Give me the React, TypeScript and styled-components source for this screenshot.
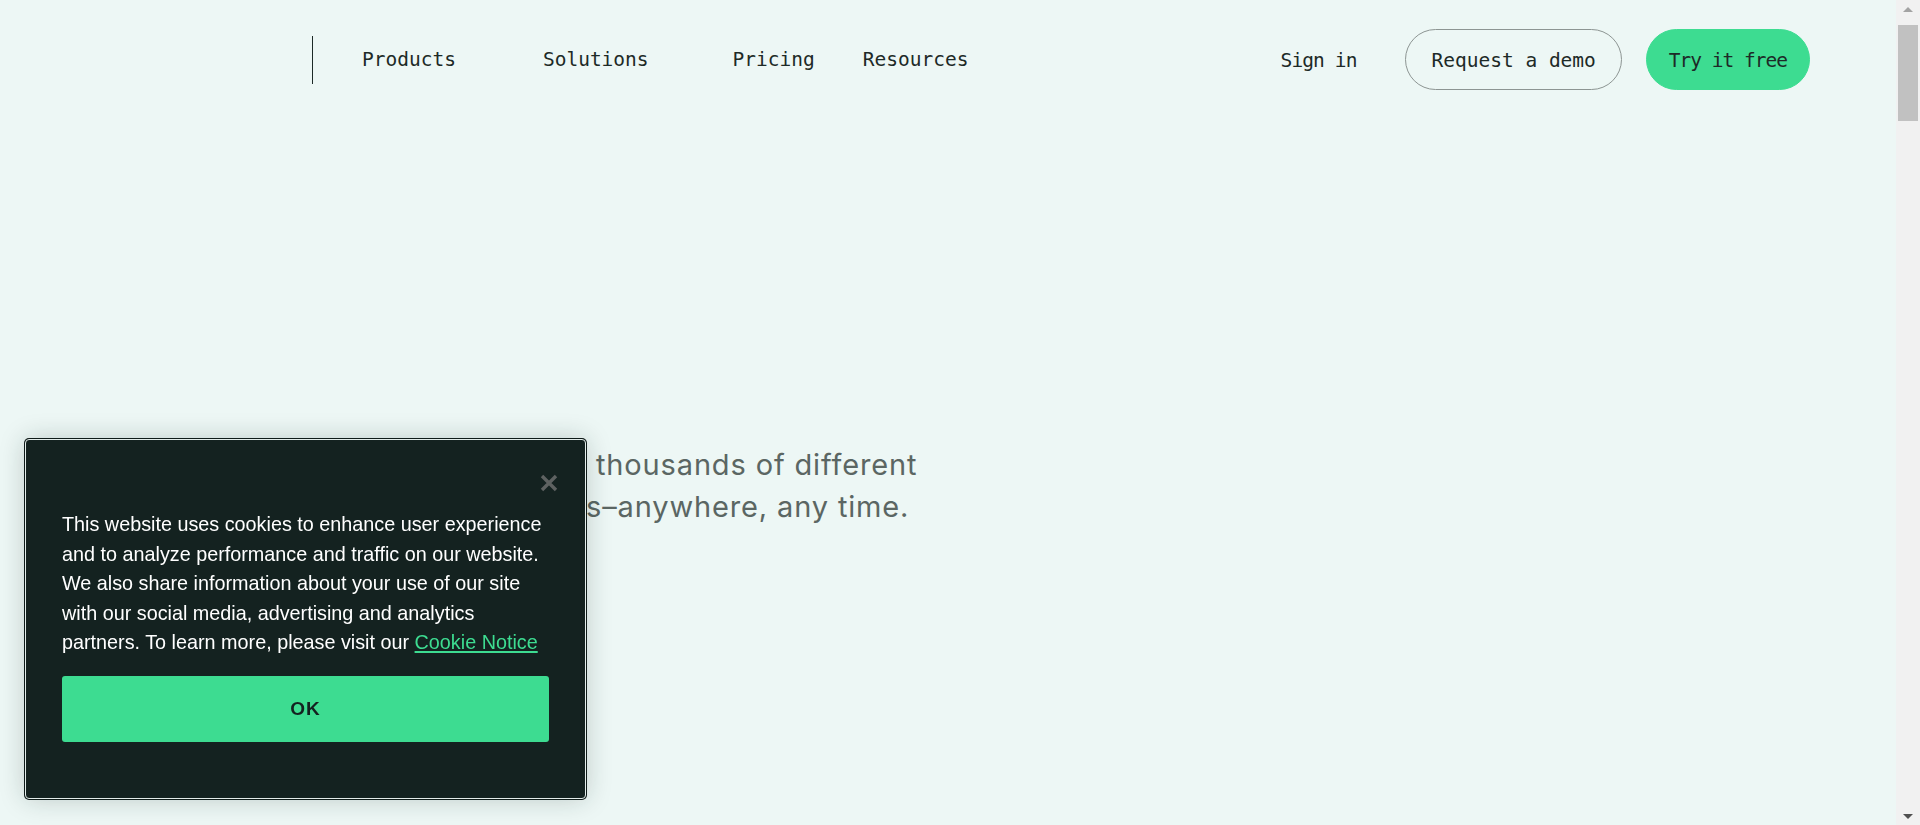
import React from "react";
import styled, { createGlobalStyle } from "styled-components";

const GlobalStyle = createGlobalStyle`
  html, body { margin: 0; padding: 0; height: 100%; overflow: hidden; }
  body {
    background: #edf7f5;
    font-family: "DejaVu Sans Mono", "Liberation Mono", monospace;
    color: #1d2a27;
  }
  * { box-sizing: border-box; }
`;

const Shell = styled.div`
  display: grid;
  grid-template-columns: 1fr 24px;
  height: 100vh;
`;

const Page = styled.div`
  min-width: 0;
  overflow: hidden;
`;

const Header = styled.header`
  display: flex;
  align-items: center;
  height: 61px;
  margin-top: 29px;
  padding: 0 86px 0 95px;
`;

const LogoSlot = styled.a`
  display: block;
  width: 217px;
  height: 48px;
  flex-shrink: 0;
`;

const Divider = styled.span`
  display: block;
  width: 1px;
  height: 48px;
  background: #1d2a27;
  margin-right: 49px;
  flex-shrink: 0;
`;

const Nav = styled.nav`
  display: flex;
  align-items: center;
  gap: 48px;
`;

const NavLink = styled.a<{ $menu?: number }>`
  font-size: 19.5px;
  line-height: 24px;
  color: #1d2a27;
  text-decoration: none;
  padding-right: ${(p) => (p.$menu ? `${p.$menu}px` : "0")};
  white-space: nowrap;
`;

const Actions = styled.div`
  margin-left: auto;
  display: flex;
  align-items: center;
`;

const SignIn = styled.a`
  font-size: 19.5px;
  color: #1d2a27;
  text-decoration: none;
  margin-right: 49px;
  letter-spacing: -0.9px;
  padding-top: 2px;
`;

const PillButton = styled.a<{ $primary?: boolean }>`
  display: flex;
  align-items: center;
  height: 61px;
  padding: ${(p) => (p.$primary ? "2px 22px 0" : "2px 25px 0")};
  border-radius: 31px;
  font-size: 19.5px;
  color: #1d2a27;
  text-decoration: none;
  white-space: nowrap;
  letter-spacing: ${(p) => (p.$primary ? "-1px" : "0")};
  border: 1px solid ${(p) => (p.$primary ? "#3ddc91" : "#8d9593")};
  background: ${(p) => (p.$primary ? "#3ddc91" : "transparent")};
  & + & {
    margin-left: 24px;
  }
`;

const Hero = styled.section`
  padding: 354px 0 0 316px;
`;

const Lead = styled.p`
  margin: 0;
  font-family: Inter, "Noto Sans", sans-serif;
  font-size: 29px;
  line-height: 41.5px;
  letter-spacing: 0.85px;
  color: #5b6663;
`;

const ScrollTrack = styled.div`
  display: flex;
  flex-direction: column;
  align-items: center;
  background: #f1f1f1;
  height: 100vh;
`;

const ArrowCell = styled.div`
  height: 17px;
  width: 100%;
  display: flex;
  align-items: center;
  justify-content: center;
  flex-shrink: 0;
`;

const Thumb = styled.div`
  margin-top: 8px;
  width: 20px;
  height: 96px;
  background: #c1c1c1;
  flex-shrink: 0;
`;

const TrackFill = styled.div`
  flex: 1;
`;

const CookieBox = styled.div`
  position: fixed;
  left: 25px;
  bottom: 26px;
  width: 561px;
  height: 360px;
  padding: 70px 36px 56px;
  background: #142220;
  border: 1px solid #e3ecea;
  border-radius: 4px;
  box-shadow: 0 0 0 1px #0e1a18, 0 0 26px rgba(20, 40, 36, 0.22);
  display: flex;
  flex-direction: column;
  font-family: "Liberation Sans", Arial, sans-serif;
`;

const CloseButton = styled.button`
  position: absolute;
  top: 34px;
  right: 27px;
  width: 18px;
  height: 18px;
  padding: 0;
  border: 0;
  background: transparent;
  display: flex;
  cursor: pointer;
`;

const CookieText = styled.p`
  margin: 0;
  font-size: 19.8px;
  line-height: 29.5px;
  color: #ffffff;
`;

const CookieLink = styled.a`
  color: #3ddc91;
  text-decoration: underline;
  text-underline-offset: 2px;
  text-decoration-thickness: 1.5px;
`;

const OkButton = styled.button`
  margin-top: auto;
  height: 66px;
  width: 100%;
  border: 0;
  border-radius: 3px;
  background: #3ddc91;
  color: #142220;
  font-family: "Liberation Sans", Arial, sans-serif;
  font-weight: 700;
  font-size: 19px;
  letter-spacing: 1px;
  cursor: pointer;
`;

function Scrollbar() {
  return (
    <ScrollTrack aria-hidden>
      <ArrowCell>
        <svg width="10" height="6" viewBox="0 0 10 6">
          <path d="M0 6 L5 1 L10 6 Z" fill="#a3a3a3" />
        </svg>
      </ArrowCell>
      <Thumb />
      <TrackFill />
      <ArrowCell>
        <svg width="10" height="6" viewBox="0 0 10 6">
          <path d="M0 0 L10 0 L5 5 Z" fill="#505050" />
        </svg>
      </ArrowCell>
    </ScrollTrack>
  );
}

export default function App() {
  return (
    <>
      <GlobalStyle />
      <Shell>
        <Page>
          <Header>
            <LogoSlot aria-label="Home" />
            <Divider />
            <Nav>
              <NavLink $menu={39}>Products</NavLink>
              <NavLink $menu={36}>Solutions</NavLink>
              <NavLink>Pricing</NavLink>
              <NavLink>Resources</NavLink>
            </Nav>
            <Actions>
              <SignIn>Sign in</SignIn>
              <PillButton>Request a demo</PillButton>
              <PillButton $primary>Try it free</PillButton>
            </Actions>
          </Header>
          <Hero>
            <Lead>
              Get feedback from thousands of different
              <br />
              people and markets–anywhere, any time.
            </Lead>
          </Hero>
        </Page>
        <Scrollbar />
      </Shell>
      <CookieBox role="dialog">
        <CloseButton aria-label="Close">
          <svg width="18" height="18" viewBox="0 0 18 18">
            <path d="M2 2 L16 16 M16 2 L2 16" stroke="#5e6261" strokeWidth="3.4" strokeLinecap="butt" />
          </svg>
        </CloseButton>
        <CookieText>
          This website uses cookies to enhance user experience and to analyze performance and
          traffic on our website. We also share information about your use of our site with our
          social media, advertising and analytics partners. To learn more, please visit our{" "}
          <CookieLink href="#">Cookie Notice</CookieLink>
        </CookieText>
        <OkButton>OK</OkButton>
      </CookieBox>
    </>
  );
}
